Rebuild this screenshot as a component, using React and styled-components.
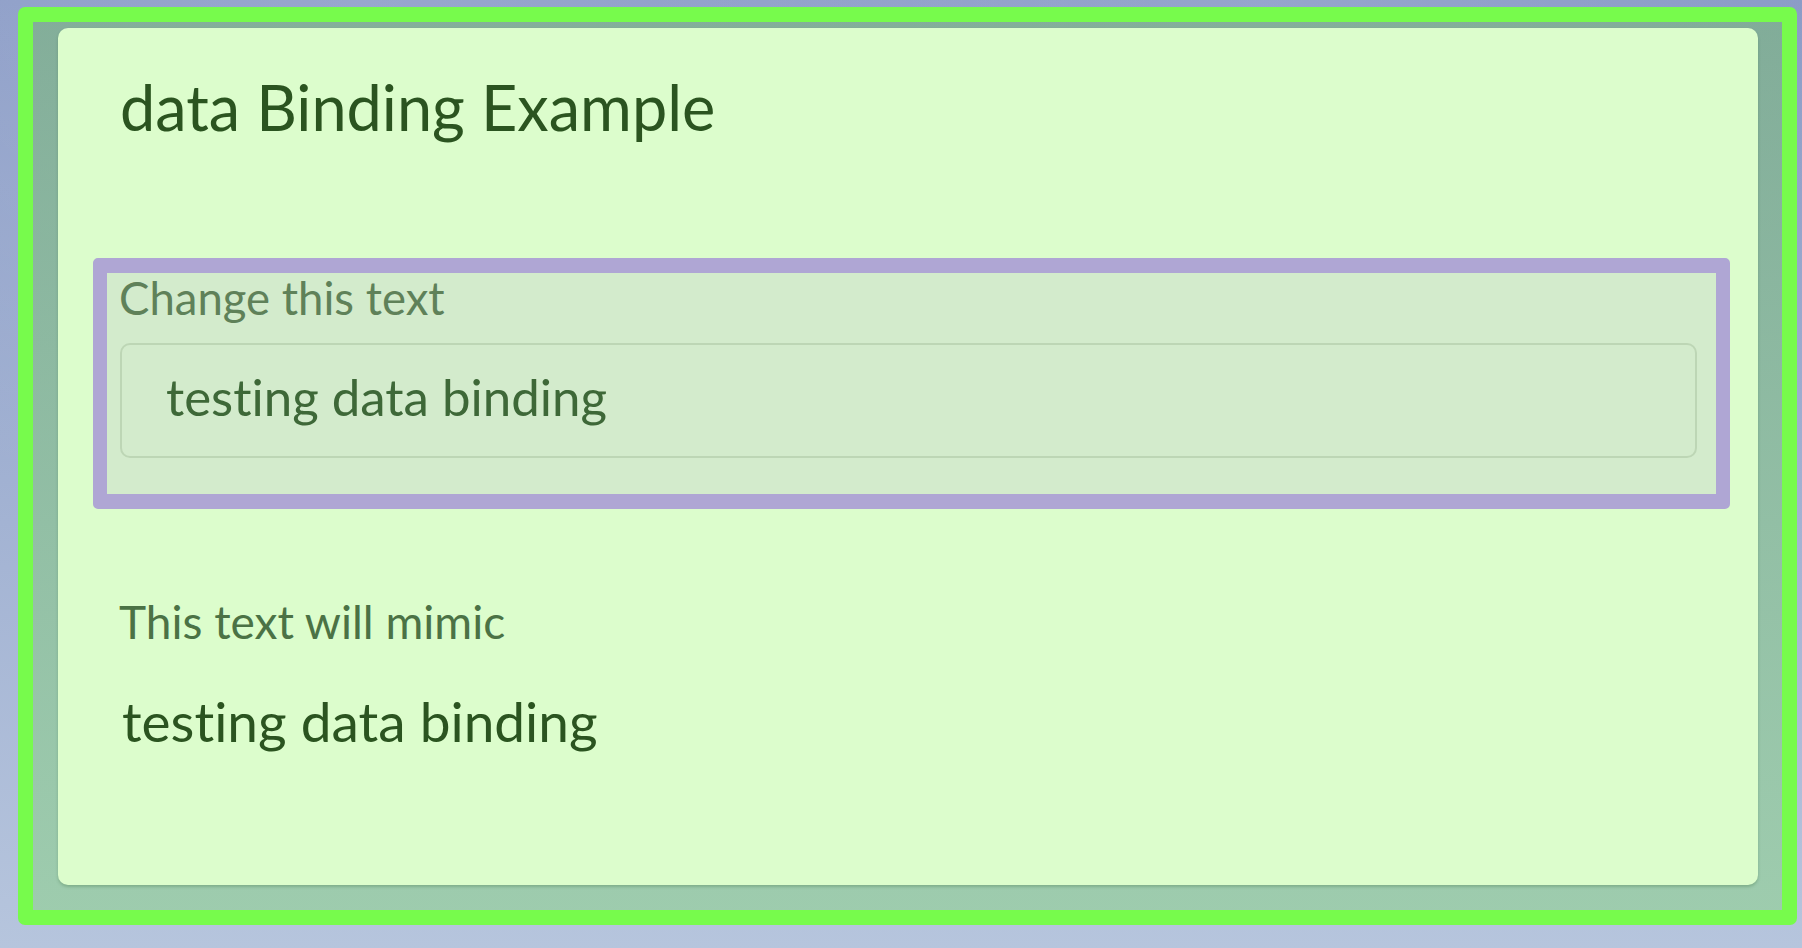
import { useState } from "react";
import styled, { createGlobalStyle } from "styled-components";

const GlobalStyle = createGlobalStyle`
  html, body {
    margin: 0;
    padding: 0;
  }
  body {
    font-family: Lato, "Open Sans", sans-serif;
    font-variant-ligatures: none;
    background:
      radial-gradient(ellipse at 20% 0%, rgba(255, 255, 255, 0.12), transparent 40%),
      radial-gradient(ellipse at 70% 0%, rgba(255, 255, 255, 0.1), transparent 35%),
      linear-gradient(180deg, #8a9bc6 0%, #a3b3d3 55%, #b6c5dd 100%);
    min-height: 948px;
  }
`;

const Page = styled.div`
  padding: 7px 5px 23px 18px;
  box-sizing: border-box;
  height: 948px;
`;

const Highlight = styled.div`
  border: 15px solid #77fb4c;
  border-radius: 7px;
  background: linear-gradient(180deg, rgba(125, 178, 135, 0.72), rgba(152, 206, 162, 0.8));
  padding: 6px 24px 25px 25px;
`;

const Card = styled.article`
  background: #dcfdcc;
  border-radius: 10px;
  box-shadow: 0 2px 3px rgba(40, 90, 40, 0.25);
  height: 857px;
  box-sizing: border-box;
  padding: 47px 28px 0 35px;
`;

const Title = styled.h1`
  margin: 0 0 ${(p) => p.$gap}px 27px;
  font-size: 63px;
  line-height: 1;
  font-weight: 400;
  color: #2b5420;
`;

const FieldBox = styled.div`
  border: 15px solid #afa6d4;
  border-left-width: 14px;
  border-right-width: 14px;
  border-radius: 5px;
  background: #d3ebcc;
  padding: 2px 19px 36px 13px;
`;

const Label = styled.label`
  display: block;
  margin-left: -1px;
  font-size: 45.5px;
  line-height: 1;
  color: #5f8159;
`;

const Input = styled.input`
  display: block;
  box-sizing: border-box;
  width: 100%;
  height: 115px;
  margin-top: 22px;
  padding: 0 0 8px 44px;
  border: 2px solid #bdd6b5;
  border-radius: 10px;
  background: #d3ebcc;
  font-family: Lato, "Open Sans", sans-serif;
  font-variant-ligatures: none;
  font-size: 51px;
  color: #3e6838;
  outline: none;
`;

const Output = styled.section`
  margin: 90px 0 0 26px;
`;

const Caption = styled.div`
  font-size: 46px;
  line-height: 1;
  color: #4b7245;
`;

const Mimic = styled.div`
  margin: 49px 0 0 3px;
  font-size: 55px;
  line-height: 1;
  color: #2b5420;
`;

export default function App() {
  const [text, setText] = useState("testing data binding");

  return (
    <>
      <GlobalStyle />
      <Page>
        <Highlight>
          <Card>
            <Title $gap={120}>data Binding Example</Title>
            <FieldBox>
              <Label htmlFor="bind">Change this text</Label>
              <Input id="bind" value={text} onChange={(e) => setText(e.target.value)} />
            </FieldBox>
            <Output>
              <Caption>This text will mimic</Caption>
              <Mimic>{text}</Mimic>
            </Output>
          </Card>
        </Highlight>
      </Page>
    </>
  );
}
